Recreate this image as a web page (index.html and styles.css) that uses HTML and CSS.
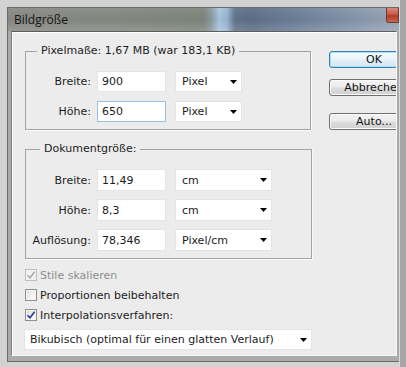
FILE: index.html
```html
<!DOCTYPE html>
<html lang="de">
<head>
<meta charset="utf-8">
<title>Bildgröße</title>
<link rel="stylesheet" href="styles.css">
</head>
<body>
<div class="screen">
  <div class="window">
    <div class="titlebar">
      <span class="title">Bildgröße</span>
      <span class="close"></span>
    </div>
    <div class="client">
      <div class="left">
        <fieldset class="group g1">
          <legend>Pixelmaße: 1,67 MB (war 183,1 KB)</legend>
          <div class="grid rows21">
            <span class="lbl">Breite:</span>
            <span class="input">900</span>
            <span class="select w-pix">Pixel<svg class="arrow" width="7" height="4" viewBox="0 0 7 4"><polygon points="0,0 7,0 3.5,4" fill="#000"/></svg></span>
            <span class="lbl">Höhe:</span>
            <span class="input focus">650</span>
            <span class="select w-pix">Pixel<svg class="arrow" width="7" height="4" viewBox="0 0 7 4"><polygon points="0,0 7,0 3.5,4" fill="#000"/></svg></span>
          </div>
        </fieldset>
        <fieldset class="group g2">
          <legend>Dokumentgröße:</legend>
          <div class="grid rows22">
            <span class="lbl">Breite:</span>
            <span class="input">11,49</span>
            <span class="select w-doc">cm<svg class="arrow" width="7" height="4" viewBox="0 0 7 4"><polygon points="0,0 7,0 3.5,4" fill="#000"/></svg></span>
            <span class="lbl">Höhe:</span>
            <span class="input">8,3</span>
            <span class="select w-doc">cm<svg class="arrow" width="7" height="4" viewBox="0 0 7 4"><polygon points="0,0 7,0 3.5,4" fill="#000"/></svg></span>
            <span class="lbl">Auflösung:</span>
            <span class="input">78,346</span>
            <span class="select w-doc">Pixel/cm<svg class="arrow" width="7" height="4" viewBox="0 0 7 4"><polygon points="0,0 7,0 3.5,4" fill="#000"/></svg></span>
          </div>
        </fieldset>
        <div class="checks">
          <div class="check disabled">
            <span class="box"><svg width="10" height="10" viewBox="0 0 10 10"><path d="M1.5 5.2 L4 7.8 L8.6 1.8" fill="none" stroke="#a9a9a9" stroke-width="1.5"/></svg></span>
            <span>Stile skalieren</span>
          </div>
          <div class="check">
            <span class="box"></span>
            <span>Proportionen beibehalten</span>
          </div>
          <div class="check">
            <span class="box"><svg width="10" height="10" viewBox="0 0 10 10"><path d="M1.5 5.2 L4 7.8 L8.6 1.8" fill="none" stroke="#243c8c" stroke-width="1.6"/></svg></span>
            <span>Interpolationsverfahren:</span>
          </div>
        </div>
        <span class="select w-wide">Bikubisch (optimal für einen glatten Verlauf)<svg class="arrow" width="7" height="4" viewBox="0 0 7 4"><polygon points="0,0 7,0 3.5,4" fill="#000"/></svg></span>
      </div>
      <div class="buttons">
        <span class="btn default">OK</span>
        <span class="btn b2">Abbrechen</span>
        <span class="btn b3">Auto...</span>
      </div>
    </div>
  </div>
  <div class="edge"></div>
</div>
</body>
</html>
```

FILE: styles.css
```css
html, body {
  margin: 0;
  padding: 0;
}
body {
  width: 406px;
  height: 367px;
  overflow: hidden;
  background: #d2d2d2;
  font-family: "DejaVu Sans", sans-serif;
  font-size: 11px;
  color: #1c1c1c;
}
.screen {
  display: flex;
  height: 367px;
}
.window {
  margin: 7px 0 0 7px;
  width: 392px;
  height: 355px;
  box-sizing: border-box;
  border-top: 1px solid #6a6a6a;
  border-left: 1px solid #6a6a6a;
  border-bottom: 1px solid #6a6a6a;
  background: #a8aaab;
  display: flex;
  flex-direction: column;
  overflow: hidden;
}
.edge {
  width: 7px;
  background: #a6a6a6;
  box-shadow: inset 1px 0 0 #d9d9d9;
}
.titlebar {
  height: 23px;
  display: flex;
  align-items: flex-start;
  padding-left: 6px;
  background:
    linear-gradient(to bottom, rgba(255,255,255,0.05) 0%, rgba(0,0,0,0.03) 50%, rgba(255,255,255,0.12) 100%),
    linear-gradient(to right, #8a8a86 0%, #868a83 25%, #7d867c 50%, #8a9ba0 52%, #a9c6e3 54%, #9cb6d2 56%, #62758e 58%, #5d6f87 62%, #6f829b 75%, #8b9bb0 92%, #9aa7b7 100%);
}
.title {
  font-family: "Open Sans", sans-serif;
  font-size: 12px;
  line-height: 23px;
  color: #161616;
}
.close {
  margin-left: auto;
  margin-right: 0;
  width: 13px;
  height: 15px;
  box-sizing: border-box;
  border: 1px solid #6d3a30;
  border-top: 0;
  border-radius: 0 0 0 3px;
  background: linear-gradient(to bottom, #d98a78 0%, #c65a45 45%, #b23b27 55%, #c8664e 100%);
}
.client {
  margin: 0 2px 0 3px;
  height: 325px;
  box-sizing: border-box;
  border-top: 1px solid #5d5d5d;
  border-left: 1px solid #7c7c7c;
  border-right: 1px solid #f7f7f7;
  border-bottom: 1px solid #f7f7f7;
  background: #ececec;
  box-shadow: inset 1px 1px 0 #ffffff;
  padding: 12px 0 0 13px;
  display: flex;
  overflow: hidden;
}
.left {
  width: 287px;
  flex: none;
}
.group {
  margin: 0;
  padding: 13px 0 7px 0;
  border: 1px solid #a3a3a3;
  box-shadow: 1px 1px 0 #fbfbfb;
  min-width: 0;
}
.g1 {
  width: 286px;
  box-sizing: border-box;
}
.g2 {
  width: 287px;
  box-sizing: border-box;
  margin-top: 12px;
}
legend {
  padding: 0 4px;
  line-height: 14px;
  font-size: 11px;
}
.g1 legend {
  margin-left: 11px;
}
.g2 legend {
  margin-left: 14px;
}
.grid {
  display: grid;
  grid-template-columns: 65px 69px auto;
  column-gap: 6px;
  justify-items: start;
}
.grid .select {
  margin-left: 3px;
}
.rows21 {
  grid-auto-rows: 21px;
  row-gap: 9px;
}
.rows22 {
  grid-auto-rows: 22px;
  row-gap: 8px;
}
.lbl {
  justify-self: end;
  align-self: center;
  white-space: nowrap;
}
.input {
  width: 69px;
  height: 100%;
  box-sizing: border-box;
  background: #fff;
  border: 1px solid #e4e4e4;
  padding-left: 4px;
  display: flex;
  align-items: center;
}
.input.focus {
  border-color: #9dbfe2;
}
.select {
  height: 100%;
  box-sizing: border-box;
  background: #fff;
  border: 1px solid #e4e4e4;
  padding: 0 4px 0 6px;
  display: flex;
  align-items: center;
  justify-content: space-between;
  white-space: nowrap;
}
.arrow {
  flex: none;
}
.w-pix {
  width: 67px;
}
.w-doc {
  width: 97px;
}
.w-wide {
  width: 288px;
  height: 21px;
  margin-left: -1px;
  margin-top: 4px;
  padding-left: 5px;
}
.checks {
  margin-top: 6px;
}
.check {
  height: 20px;
  display: flex;
  align-items: center;
  gap: 3px;
}
.check.disabled {
  color: #8d8d8d;
}
.box {
  width: 12px;
  height: 12px;
  box-sizing: border-box;
  border: 1px solid #8f8f8f;
  background: linear-gradient(135deg, #dcdcdc 0%, #f4f4f4 60%, #ffffff 100%);
  box-shadow: inset 0 0 0 1px #f2f2f2;
  display: flex;
  align-items: center;
  justify-content: center;
}
.check.disabled .box {
  border-color: #bdbdbd;
  background: #f2f2f2;
}
.buttons {
  margin-left: 17px;
  margin-top: 7px;
  display: flex;
  flex-direction: column;
  flex: none;
}
.btn {
  width: 90px;
  height: 17px;
  box-sizing: border-box;
  border: 1px solid #707070;
  border-radius: 3px;
  background: linear-gradient(to bottom, #f3f3f3 0%, #ebebeb 48%, #dddddd 52%, #d0d0d0 100%);
  box-shadow: inset 0 0 0 1px #fbfbfb;
  text-align: center;
  line-height: 15px;
  font-size: 11px;
  color: #111;
}
.btn.default {
  border-color: #3c7fb1;
  box-shadow: inset 0 0 0 1px #a8def6;
  background: linear-gradient(to bottom, #f4fafd 0%, #ecf5fb 48%, #e0eef7 52%, #d6e8f3 100%);
}
.b2 {
  margin-top: 11px;
}
.b3 {
  margin-top: 17px;
}
```
